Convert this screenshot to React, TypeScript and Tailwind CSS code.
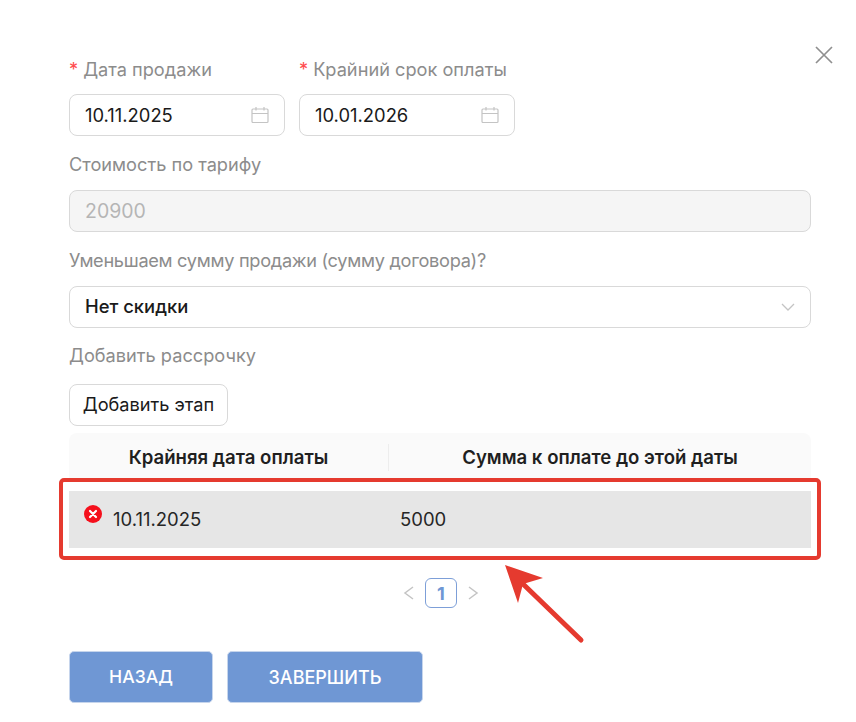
function CalendarIcon() {
  return (
    <svg width="18" height="18" viewBox="0 0 18 18" fill="none" stroke="#c4c4c4" strokeWidth="1.2">
      <rect x="1" y="3" width="16" height="13.5" rx="1" />
      <path d="M1 7.5h16M5 1v3.5M13 1v3.5" />
    </svg>
  );
}

function Label({ children, required }: { children: string; required?: boolean }) {
  return (
    <div className="text-[18.2px] leading-6 text-[#8c8c8c] whitespace-nowrap">
      {required && <span className="text-[#ff4d4f] mr-[5px]">*</span>}
      {children}
    </div>
  );
}

function DateField({ label, value }: { label: string; value: string }) {
  return (
    <div className="w-[216px]">
      <Label required>{label}</Label>
      <div className="mt-[13px] h-[42px] px-[15px] flex items-center justify-between rounded-lg border border-[#d9d9d9] bg-white">
        <span className="text-[18.4px] pt-px text-[#1a1a1a]">{value}</span>
        <CalendarIcon />
      </div>
    </div>
  );
}

export default function App() {
  return (
    <div className="relative w-[856px] h-[722px] overflow-hidden bg-white pt-[57px] pl-[69px] pr-[45px] font-['Inter','Noto_Sans',sans-serif]">
      <button className="absolute left-[815px] top-[46px]">
        <svg width="18" height="18" viewBox="0 0 18 18" fill="none" stroke="#8f8f8f" strokeWidth="1.7">
          <path d="M1 1l16 16M17 1L1 17" />
        </svg>
      </button>

      <div className="flex gap-[14px]">
        <DateField label="Дата продажи" value="10.11.2025" />
        <DateField label="Крайний срок оплаты" value="10.01.2026" />
      </div>

      <div className="mt-4">
        <Label>Стоимость по тарифу</Label>
      </div>
      <div className="mt-[14px] h-[42px] px-[15px] pt-px flex items-center rounded-lg border border-[#d9d9d9] bg-[#f5f5f5] text-[19.5px] text-[#b5b5b5]">
        20900
      </div>

      <div className="mt-4 tracking-[-0.3px]">
        <Label>Уменьшаем сумму продажи (сумму договора)?</Label>
      </div>
      <div className="mt-[14px] h-[42px] pl-[15px] pr-[14px] flex items-center justify-between rounded-lg border border-[#d9d9d9] bg-white">
        <span className="text-[18.4px] font-medium text-[#1a1a1a]">Нет скидки</span>
        <svg width="16" height="10" viewBox="0 0 16 10" fill="none" stroke="#c4c4c4" strokeWidth="1.3">
          <path d="M2 2l6 6 6-6" />
        </svg>
      </div>

      <div className="mt-[15px]">
        <Label>Добавить рассрочку</Label>
      </div>
      <button className="mt-[17px] block h-[42px] w-[159px] rounded-lg border border-[#d9d9d9] bg-white text-[18.2px] text-[#1a1a1a] whitespace-nowrap">
        Добавить этап
      </button>

      <div className="mt-[7px]">
        <div className="flex h-[49px] items-center rounded-t-lg bg-[#fafafa] text-[18.6px] font-semibold text-[#1f1f1f]">
          <div className="w-[319px] text-center">Крайняя дата оплаты</div>
          <div className="flex-1 h-[27px] leading-[27px] text-center border-l border-[#ededed]">Сумма к оплате до этой даты</div>
        </div>
        <div className="mt-[9px] flex h-[57px] bg-[#e6e6e6] text-[18.5px] text-[#262626]">
          <div className="w-[319px] pl-[15px] flex items-start">
            <svg className="mt-[14px]" width="18" height="18" viewBox="0 0 18 18">
              <circle cx="9" cy="9" r="9" fill="#f5101c" />
              <path d="M6 6l6 6M12 6l-6 6" stroke="#fff" strokeWidth="2.2" strokeLinecap="round" />
            </svg>
            <span className="ml-[11px] mt-[15px]">10.11.2025</span>
          </div>
          <div className="pl-[12px] pt-[15px]">5000</div>
        </div>
      </div>

      <div className="mt-[30px] flex h-[30px] items-center justify-center gap-[9px] pl-[2px]">
        <svg width="14" height="16" viewBox="0 0 14 16" fill="none" stroke="#c4c4c4" strokeWidth="1.5">
          <path d="M11 2L3 8l8 6" />
        </svg>
        <div className="flex h-[30px] w-[32px] items-center justify-center rounded-md border border-[#7d9fd8] text-[18px] font-bold text-[#6f97d4]">
          1
        </div>
        <svg width="14" height="16" viewBox="0 0 14 16" fill="none" stroke="#c4c4c4" strokeWidth="1.5">
          <path d="M3 2l8 6-8 6" />
        </svg>
      </div>

      <div className="mt-[43px] flex gap-[14px]">
        <button className="h-[52px] w-[144px] rounded-[5px] border border-[#c6d5ec] bg-[#6f97d4] text-[17.6px] font-medium text-white">
          НАЗАД
        </button>
        <button className="h-[52px] w-[196px] rounded-[5px] border border-[#c6d5ec] bg-[#6f97d4] text-[18px] font-medium text-white">
          ЗАВЕРШИТЬ
        </button>
      </div>

      {/* annotation over the row */}
      <div className="absolute left-[59px] top-[478px] h-[82px] w-[762px] rounded-[5px] border-4 border-[#e53a2f]" />
      <svg className="absolute left-0 top-0" width="856" height="722" fill="none">
        <path d="M581 640L522 583" stroke="#e53a2f" strokeWidth="5" strokeLinecap="round" />
        <path d="M505 565L543 578L523 584L518 603Z" fill="#e53a2f" />
      </svg>
    </div>
  );
}
